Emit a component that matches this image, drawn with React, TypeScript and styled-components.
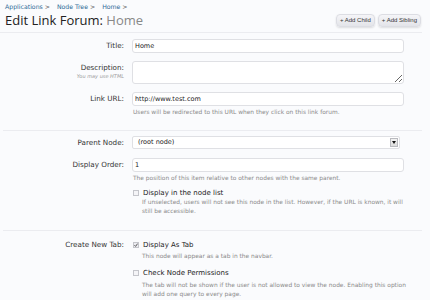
import React from "react";
import styled, { createGlobalStyle } from "styled-components";

const GlobalStyle = createGlobalStyle`
  body {
    margin: 0;
    background: #fafbfd;
    font-family: "DejaVu Sans", Verdana, sans-serif;
    color: #333;
  }
`;

const Page = styled.div`
  width: 430px;
  height: 300px;
  overflow: hidden;
  padding-right: 8px;
  box-sizing: border-box;
`;

const Header = styled.div`
  padding: 3px 1px 4px 5px;
  border-bottom: 1px solid #ebecf0;
`;

const Crumbs = styled.div`
  display: flex;
  gap: 7px;
  font-size: 6.2px;
  line-height: 8px;
`;

const Crumb = styled.a`
  color: #2d6a96;
  text-decoration: none;
  &::after {
    content: " >";
    color: #555;
  }
`;

const TitleRow = styled.div`
  display: flex;
  justify-content: space-between;
  align-items: center;
  margin-top: 1px;
`;

const H1 = styled.h1`
  margin: 0;
  font-family: "Open Sans", "DejaVu Sans", sans-serif;
  font-size: 13px;
  line-height: 16px;
  font-weight: normal;
  color: #222;
`;

const Muted = styled.span`
  color: #888;
`;

const Actions = styled.div`
  display: flex;
  gap: 3px;
`;

const Button = styled.button`
  font-family: "Liberation Sans", Arial, sans-serif;
  font-size: 6px;
  color: #333;
  height: 13px;
  padding: 0 3px;
  border: 1px solid #dcdde3;
  border-radius: 4px;
  background: linear-gradient(#f5f5f8, #e3e4e9);
  box-shadow: 0 1px 2px rgba(0, 0, 0, 0.12);
`;

const Form = styled.div`
  padding-top: 6px;
`;

const Section = styled.div<{ $last?: boolean; $pad?: number; $after?: number }>`
  padding-bottom: ${(p) => (p.$last ? 0 : p.$pad ?? 11)}px;
  margin-bottom: ${(p) => p.$after ?? 7}px;
  margin-left: 3px;
  border-bottom: ${(p) => (p.$last ? "none" : "1px solid #ebecf0")};
`;

const Row = styled.div<{ $gap?: number }>`
  display: grid;
  grid-template-columns: 121px 272px;
  column-gap: 8px;
  margin-bottom: ${(p) => p.$gap ?? 8}px;
  &:last-child {
    margin-bottom: 0;
  }
`;

const Label = styled.div`
  text-align: right;
  font-size: 7.2px;
  line-height: 14px;
  color: #333;
`;

const LabelHint = styled.div`
  margin-top: -2px;
  font-size: 5px;
  line-height: 7px;
  font-style: italic;
  color: #999;
`;

const Input = styled.input`
  box-sizing: border-box;
  width: 100%;
  height: 14px;
  margin: 0;
  padding: 0 2px;
  border: 1px solid #dfe0e4;
  border-radius: 3px;
  background: #fff;
  font-family: inherit;
  font-size: 6.5px;
  color: #222;
  outline: none;
`;

const TextArea = styled.textarea`
  box-sizing: border-box;
  display: block;
  width: 100%;
  height: 23px;
  margin: 0;
  padding: 2px 3px;
  border: 1px solid #dfe0e4;
  border-radius: 3px;
  background: #fff;
  font-family: inherit;
  font-size: 6.5px;
`;

const SelectBox = styled.div`
  box-sizing: border-box;
  display: flex;
  align-items: center;
  justify-content: space-between;
  width: 268px;
  height: 13px;
  padding: 0 1px 0 5px;
  border: 1px solid #dfe0e4;
  border-radius: 2px;
  background: #fff;
  font-size: 6.5px;
  color: #222;
`;

const SelectArrow = styled.span`
  display: flex;
  align-items: center;
  justify-content: center;
  width: 8px;
  height: 9px;
  border: 1px solid #b9babf;
  box-sizing: border-box;
  background: linear-gradient(#f3f3f3, #dcdcdc);
`;

const Hint = styled.div<{ $indent?: boolean; $top?: number }>`
  margin-top: ${(p) => p.$top ?? 2}px;
  padding-left: ${(p) => (p.$indent ? 10 : 1)}px;
  font-size: 5.9px;
  line-height: 8.6px;
  color: #8a8a8a;
  white-space: nowrap;
`;

const Check = styled.div`
  display: flex;
  align-items: center;
  gap: 4px;
  padding-left: 1px;
  font-size: 7px;
  line-height: 10px;
  color: #222;
`;

const Box = styled.span<{ $on?: boolean }>`
  display: inline-flex;
  align-items: center;
  justify-content: center;
  width: 4px;
  height: 4px;
  border: 1px solid #c4c5cb;
  background: ${(p) => (p.$on ? "#ececf1" : "#f4f4f7")};
`;

const Stack = styled.div<{ $pad?: number }>`
  display: flex;
  flex-direction: column;
  padding-top: ${(p) => p.$pad ?? 0}px;
`;

const Spacer = styled.div<{ $h: number }>`
  height: ${(p) => p.$h}px;
`;

const CheckMark = () => (
  <svg width="4" height="4" viewBox="0 0 10 10">
    <path d="M1 5.5 L4 8.5 L9 1.5" fill="none" stroke="#444" strokeWidth="2.2" />
  </svg>
);

const App: React.FC = () => {
  return (
    <Page>
      <GlobalStyle />
      <Header>
        <Crumbs>
          <Crumb href="#">Applications</Crumb>
          <Crumb href="#">Node Tree</Crumb>
          <Crumb href="#">Home</Crumb>
        </Crumbs>
        <TitleRow>
          <H1>
            Edit Link Forum: <Muted>Home</Muted>
          </H1>
          <Actions>
            <Button>+ Add Child</Button>
            <Button>+ Add Sibling</Button>
          </Actions>
        </TitleRow>
      </Header>

      <Form>
        <Section $pad={13} $after={5}>
          <Row>
            <Label>Title:</Label>
            <Input value="Home" readOnly />
          </Row>
          <Row>
            <Label>
              Description:
              <LabelHint>You may use HTML</LabelHint>
            </Label>
            <TextArea readOnly />
          </Row>
          <Row>
            <Label>Link URL:</Label>
            <Stack>
              <Input value="http://www.test.com" readOnly />
              <Hint>Users will be redirected to this URL when they click on this link forum.</Hint>
            </Stack>
          </Row>
        </Section>

        <Section>
          <Row>
            <Label>Parent Node:</Label>
            <SelectBox>
              (root node)
              <SelectArrow>
                <svg width="4" height="3" viewBox="0 0 4 3">
                  <path d="M0 0 H4 L2 3 Z" fill="#111" />
                </svg>
              </SelectArrow>
            </SelectBox>
          </Row>
          <Row $gap={6}>
            <Label>Display Order:</Label>
            <Stack>
              <Input value="1" readOnly />
              <Hint>The position of this item relative to other nodes with the same parent.</Hint>
            </Stack>
          </Row>
          <Row>
            <Label />
            <Stack>
              <Check>
                <Box />
                Display in the node list
              </Check>
              <Hint $indent $top={0}>
                If unselected, users will not see this node in the list. However, if the URL is known, it will
                <br />
                still be accessible.
              </Hint>
              <Spacer $h={4} />
            </Stack>
          </Row>
        </Section>

        <Section $last>
          <Row>
            <Label>Create New Tab:</Label>
            <Stack $pad={2}>
              <Check>
                <Box $on>
                  <CheckMark />
                </Box>
                Display As Tab
              </Check>
              <Hint $indent>This node will appear as a tab in the navbar.</Hint>
              <Spacer $h={7} />
              <Check>
                <Box />
                Check Node Permissions
              </Check>
              <Hint $indent $top={3}>
                The tab will not be shown if the user is not allowed to view the node. Enabling this option
                <br />
                will add one query to every page.
              </Hint>
            </Stack>
          </Row>
        </Section>
      </Form>
    </Page>
  );
};

export default App;
